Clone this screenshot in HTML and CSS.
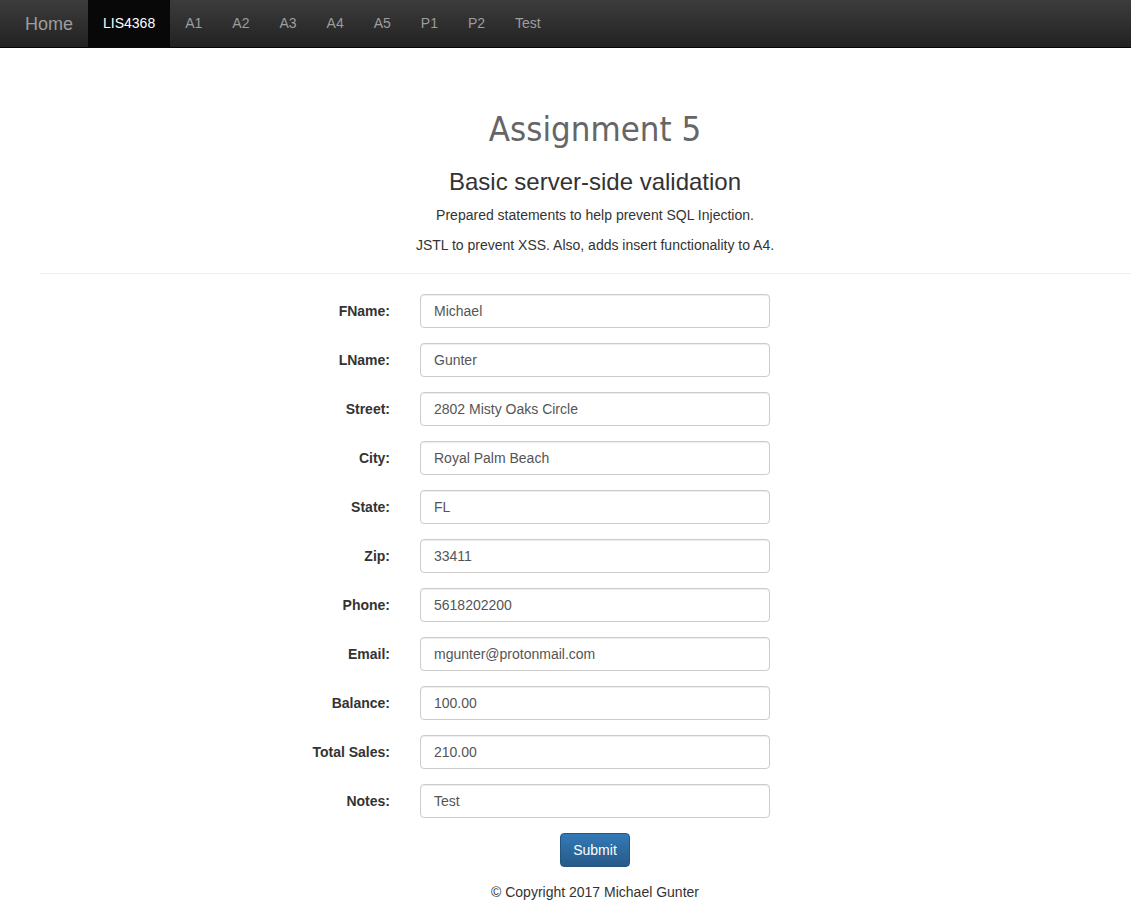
FILE: index.html
```html
<!DOCTYPE html>
<html>
<head>
<meta charset="utf-8">
<link rel="stylesheet" href="styles.css">
</head>
<body>
<nav class="navbar">
  <a class="brand" href="#">Home</a>
  <ul class="nav">
    <li class="active"><a href="#">LIS4368</a></li>
    <li><a href="#">A1</a></li>
    <li><a href="#">A2</a></li>
    <li><a href="#">A3</a></li>
    <li><a href="#">A4</a></li>
    <li><a href="#">A5</a></li>
    <li><a href="#">P1</a></li>
    <li><a href="#">P2</a></li>
    <li><a href="#">Test</a></li>
  </ul>
</nav>
<main class="page">
  <header class="page-header">
    <h1 class="title">Assignment 5</h1>
    <h2 class="subtitle">Basic server-side validation</h2>
    <p>Prepared statements to help prevent SQL Injection.</p>
    <p>JSTL to prevent XSS. Also, adds insert functionality to A4.</p>
  </header>
  <form class="form">
    <div class="row"><label>FName:</label><input type="text" value="Michael"></div>
    <div class="row"><label>LName:</label><input type="text" value="Gunter"></div>
    <div class="row"><label>Street:</label><input type="text" value="2802 Misty Oaks Circle"></div>
    <div class="row"><label>City:</label><input type="text" value="Royal Palm Beach"></div>
    <div class="row"><label>State:</label><input type="text" value="FL"></div>
    <div class="row"><label>Zip:</label><input type="text" value="33411"></div>
    <div class="row"><label>Phone:</label><input type="text" value="5618202200"></div>
    <div class="row"><label>Email:</label><input type="text" value="mgunter@protonmail.com"></div>
    <div class="row"><label>Balance:</label><input type="text" value="100.00"></div>
    <div class="row"><label>Total Sales:</label><input type="text" value="210.00"></div>
    <div class="row"><label>Notes:</label><input type="text" value="Test"></div>
    <div class="actions"><button type="button" class="btn">Submit</button></div>
  </form>
  <footer class="footer">© Copyright 2017 Michael Gunter</footer>
</main>
</body>
</html>
```
FILE: styles.css
```css
html { overflow-x: hidden; }
body {
  margin: 0;
  font-family: "Liberation Sans", Arial, sans-serif;
  font-size: 14px;
  line-height: 20px;
  color: #333;
  background: #fff;
}
.navbar {
  height: 48px;
  display: flex;
  align-items: stretch;
  background: linear-gradient(to bottom, #3c3c3c 0%, #222 100%);
  border-bottom: 1px solid #080808;
  box-sizing: border-box;
}
.brand {
  padding: 0 15px 0 25px;
  font-size: 18px;
  line-height: 48px;
  color: #9d9d9d;
  text-decoration: none;
}
.nav {
  display: flex;
  list-style: none;
  margin: 0;
  padding: 0;
}
.nav li a {
  display: block;
  padding: 0 15px;
  line-height: 47px;
  color: #9d9d9d;
  text-decoration: none;
}
.nav li.active a {
  color: #fff;
  background: #080808;
}
.page {
  margin-left: 40px;
  width: 1110px;
}
.page-header {
  text-align: center;
  padding-top: 58px;
  padding-bottom: 8px;
  border-bottom: 1px solid #eee;
  margin-bottom: 20px;
}
.title {
  margin: 0;
  font-family: "DejaVu Sans Condensed", "DejaVu Sans", Verdana, sans-serif;
  font-stretch: condensed;
  font-weight: normal;
  font-size: 34.5px;
  line-height: 46px;
  color: #666;
}
.subtitle {
  margin: 17px 0 10px;
  font-weight: normal;
  font-size: 24px;
  line-height: 26px;
  color: #333;
}
.page-header p { margin: 0 0 10px; }
.form {
  display: flex;
  flex-direction: column;
  gap: 15px;
}
.row {
  display: grid;
  grid-template-columns: 350px 350px;
  column-gap: 30px;
  align-items: center;
}
.row label {
  text-align: right;
  font-weight: bold;
}
.row input {
  box-sizing: border-box;
  height: 34px;
  width: 350px;
  padding: 6px 13px;
  font-family: inherit;
  font-size: 14px;
  color: #555;
  border: 1px solid #ccc;
  border-radius: 4px;
  box-shadow: inset 0 1px 1px rgba(0,0,0,.075);
}
.actions {
  display: flex;
  justify-content: center;
}
.btn {
  height: 34px;
  padding: 6px 12px;
  font-family: inherit;
  font-size: 14px;
  color: #fff;
  border: 1px solid #245580;
  border-radius: 4px;
  background: linear-gradient(to bottom, #337ab7 0%, #265a88 100%);
}
.footer {
  text-align: center;
  margin-top: 15px;
}
```
